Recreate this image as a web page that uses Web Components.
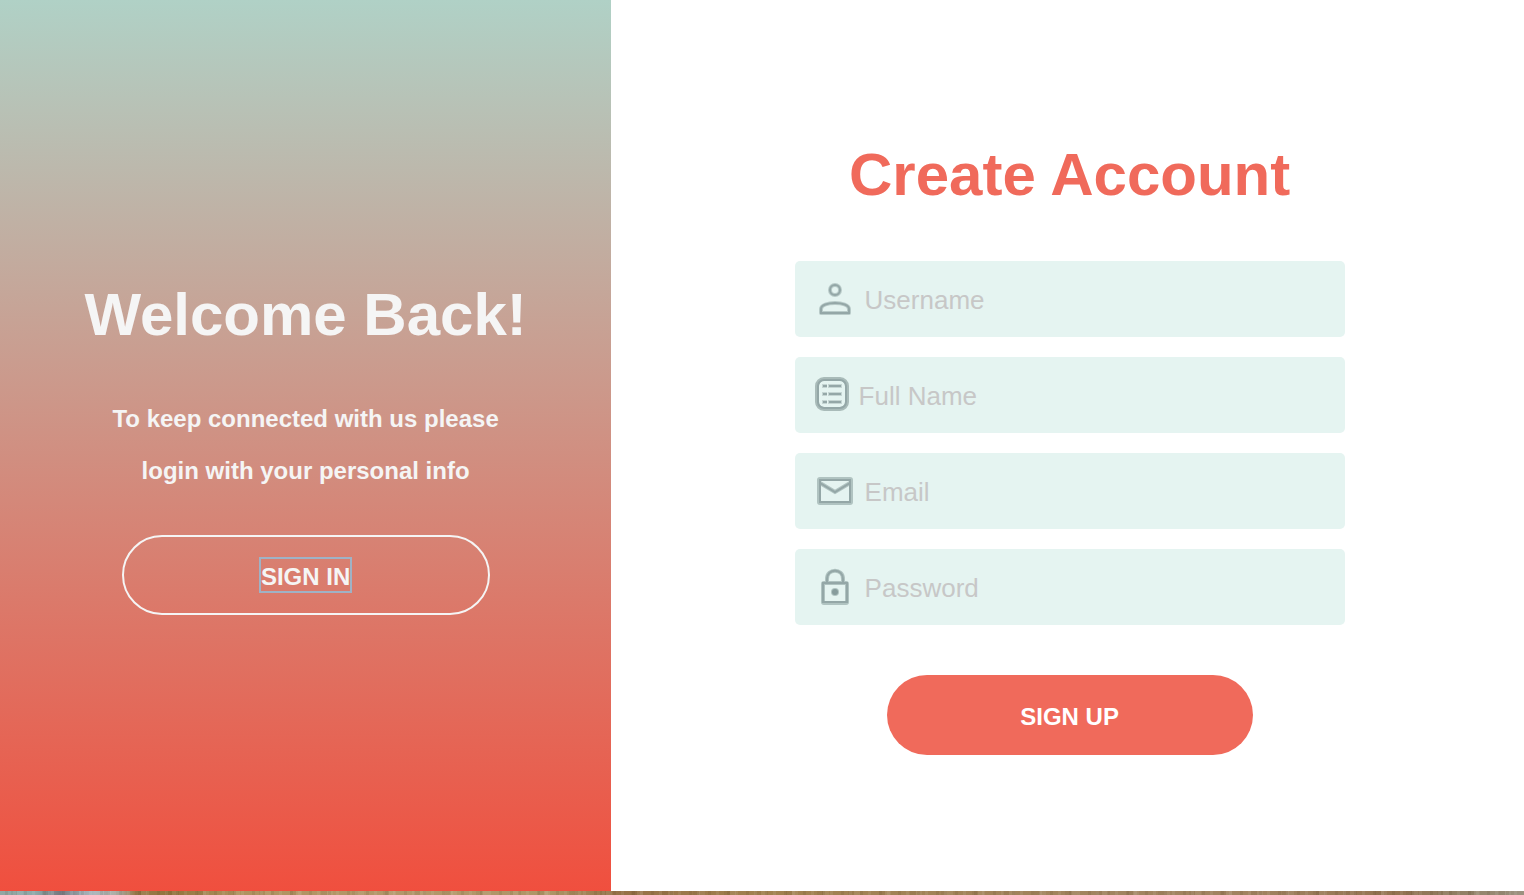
<!DOCTYPE html>
<html lang="en">
<head>
<meta charset="utf-8">
<meta name="viewport" content="width=device-width, initial-scale=1">
<title>Create Account</title>
<style>
  body { margin: 0; font-family: "Liberation Sans", Arial, sans-serif; overflow-x: hidden; }
</style>
</head>
<body>
<auth-page>
  <welcome-panel slot="aside" heading="Welcome Back!">
    To keep connected with us please<br>login with your personal info
    <pill-button slot="action" variant="outline">SIGN IN</pill-button>
  </welcome-panel>
  <signup-form slot="main" heading="Create Account">
    <form-field label="Username" name="username" autocomplete="username">
      <svg slot="icon" width="40" height="40" viewBox="0 0 40 40" fill="none" aria-hidden="true">
        <g stroke="#b9cbc9" stroke-width="4" stroke-linejoin="round"><circle cx="20" cy="11" r="5"/><path d="M6 34V30C6 22 34 22 34 30V34Z"/></g>
        <g stroke="#94a7a7" stroke-width="2"><circle cx="20" cy="11" r="5"/><path d="M6 34V30C6 22 34 22 34 30V34Z"/></g>
      </svg>
    </form-field>
    <form-field label="Full Name" name="fullname" autocomplete="name">
      <svg slot="icon" width="34" height="36" viewBox="0 0 34 36" fill="none" aria-hidden="true">
        <rect x="2" y="2" width="30" height="30" rx="7" stroke="#a9bbb9" stroke-width="4"/>
        <rect x="3" y="3" width="28" height="28" rx="6" stroke="#94a7a7" stroke-width="2"/>
        <path d="M7 9h5M13 9h14M7 17h5M13 17h14M7 25h5M13 25h14" stroke="#c5d5d3" stroke-width="4"/>
        <path d="M8 9h4M14 9h12M8 17h4M14 17h12M8 25h4M14 25h12" stroke="#94a7a7" stroke-width="2"/>
      </svg>
    </form-field>
    <form-field label="Email" name="email" type="email" autocomplete="email">
      <svg slot="icon" width="40" height="40" viewBox="0 0 40 40" fill="none" aria-hidden="true">
        <g stroke="#b0c3c1" stroke-width="4"><rect x="4" y="8" width="32" height="24" rx="1"/><path d="M5 12L20 21L35 12"/></g>
        <g stroke="#94a7a7" stroke-width="2"><rect x="5" y="9" width="30" height="22"/><path d="M5 12L20 21L35 12"/></g>
      </svg>
    </form-field>
    <form-field label="Password" name="password" type="password" autocomplete="new-password">
      <svg slot="icon" width="40" height="40" viewBox="0 0 40 40" fill="none" aria-hidden="true">
        <g stroke="#b0c3c1" stroke-width="4"><rect x="8" y="16" width="24" height="20" rx="1"/><path d="M12 16V12C12 1 28 1 28 12V16"/></g>
        <g stroke="#94a7a7" stroke-width="2"><rect x="8" y="16" width="24" height="19"/><path d="M12 16V12C12 1 28 1 28 12V16"/></g>
        <circle cx="20" cy="25" r="4" fill="#b0c3c1"/><circle cx="20" cy="25" r="3" fill="#879c9c"/>
      </svg>
    </form-field>
    <pill-button slot="action">SIGN UP</pill-button>
  </signup-form>
</auth-page>

<script>
const define = (name, html, setup) => {
  const template = document.createElement('template');
  template.innerHTML = html;
  customElements.define(name, class extends HTMLElement {
    constructor() {
      super();
      this.attachShadow({ mode: 'open' }).append(template.content.cloneNode(true));
    }
    connectedCallback() { if (setup) setup(this, this.shadowRoot); }
  });
};

const setHeading = (host, root) => {
  root.querySelector('h1').textContent = host.getAttribute('heading');
};

/* The panels bleed slightly past the right edge; the backdrop shows below them. */
define('auth-page', `
  <style>
    :host { display: grid; grid-template-columns: 2fr 3fr; grid-template-rows: 1fr 4px;
            width: calc(100% + 4px); min-height: 100vh; background: #fff; }
    .backdrop { grid-column: 1 / -1; background:
      repeating-linear-gradient(90deg, #0000 0 5px, #3d280f18 5px 8px, #0000 8px 13px, #ffffff12 13px 16px, #0000 16px 19px),
      repeating-linear-gradient(90deg, #0000 0 11px, #3d280f12 11px 17px, #ffffff10 17px 23px, #0000 23px 31px),
      linear-gradient(90deg, #93a5a2 0, #8fa9aa 35px, #77777f 60px, #9aa5ad 80px, #aeb7bc 95px, #a8a59a 120px,
        #98794a 135px, #93743f 170px, #b0925f 240px, #b3976b 400px, #ae9566 550px, #957046 620px, #a1814f 760px,
        #a18460 1120px, #a18360 1250px, #937351 1400px, #8f7c60 1450px, #9c9280 1524px); }
  </style>
  <slot name="aside"></slot>
  <slot name="main"></slot>
  <div class="backdrop"></div>`);

define('welcome-panel', `
  <style>
    :host { display: flex; flex-direction: column; align-items: center; justify-content: center;
            background: linear-gradient(#b0d1c6, #f04f3e); color: #f5f5f5; text-align: center; }
    h1 { margin: 0 0 39px; font-size: 60px; line-height: 78px; }
    p { margin: 0 0 38px; font-size: 24px; line-height: 52px; font-weight: bold; }
  </style>
  <h1></h1>
  <p><slot></slot></p>
  <slot name="action"></slot>`, setHeading);

define('signup-form', `
  <style>
    :host { display: flex; align-items: center; justify-content: center; background: #fff; }
    form { display: flex; flex-direction: column; align-items: center; width: 550px; max-width: 90%; }
    h1 { margin: 0 0 47px; font-size: 60px; line-height: 78px; color: #f06a5b; }
    .fields { display: grid; gap: 20px; width: 100%; margin-bottom: 50px; }
  </style>
  <form>
    <h1></h1>
    <div class="fields"><slot></slot></div>
    <slot name="action"></slot>
  </form>`, setHeading);

define('form-field', `
  <style>
    :host { display: block; }
    label { display: flex; align-items: center; gap: 10px; height: 76px; padding-left: 20px;
            border-radius: 5px; background: #e5f4f1; }
    ::slotted(svg) { display: block; flex: none; }
    input { flex: 1; min-width: 0; height: 100%; box-sizing: border-box; margin: 0; padding: 2px 16px 0 0;
            border: 0; outline: 0; background: none; font: 26px "Liberation Sans", Arial, sans-serif; color: #555; }
    input::placeholder { color: #c7c7c7; opacity: 1; }
  </style>
  <label><slot name="icon"></slot><input></label>`, (host, root) => {
  const input = root.querySelector('input');
  const label = host.getAttribute('label');
  input.placeholder = label;
  input.setAttribute('aria-label', label);
  input.type = host.getAttribute('type') || 'text';
  input.name = host.getAttribute('name');
  input.autocomplete = host.getAttribute('autocomplete');
});

define('pill-button', `
  <style>
    :host { display: block; width: 366px; max-width: 90%; }
    :host([variant="outline"]) { width: 368px; }
    button { display: flex; align-items: center; justify-content: center; box-sizing: border-box;
             width: 100%; height: 80px; margin: 0; padding: 0; border: 0; border-radius: 40px;
             background: #f06a5b; color: #fff; font: bold 24px/28px "Liberation Sans", Arial, sans-serif; cursor: pointer; }
    span { padding-top: 4px; }
    :host([variant="outline"]) button { border: 2px solid #f5f5f5; background: none; color: #f5f5f5; }
    :host([variant="outline"]) span { border: 2px solid #9fb2c5; }
  </style>
  <button type="button"><span><slot></slot></span></button>`);
</script>
</body>
</html>
